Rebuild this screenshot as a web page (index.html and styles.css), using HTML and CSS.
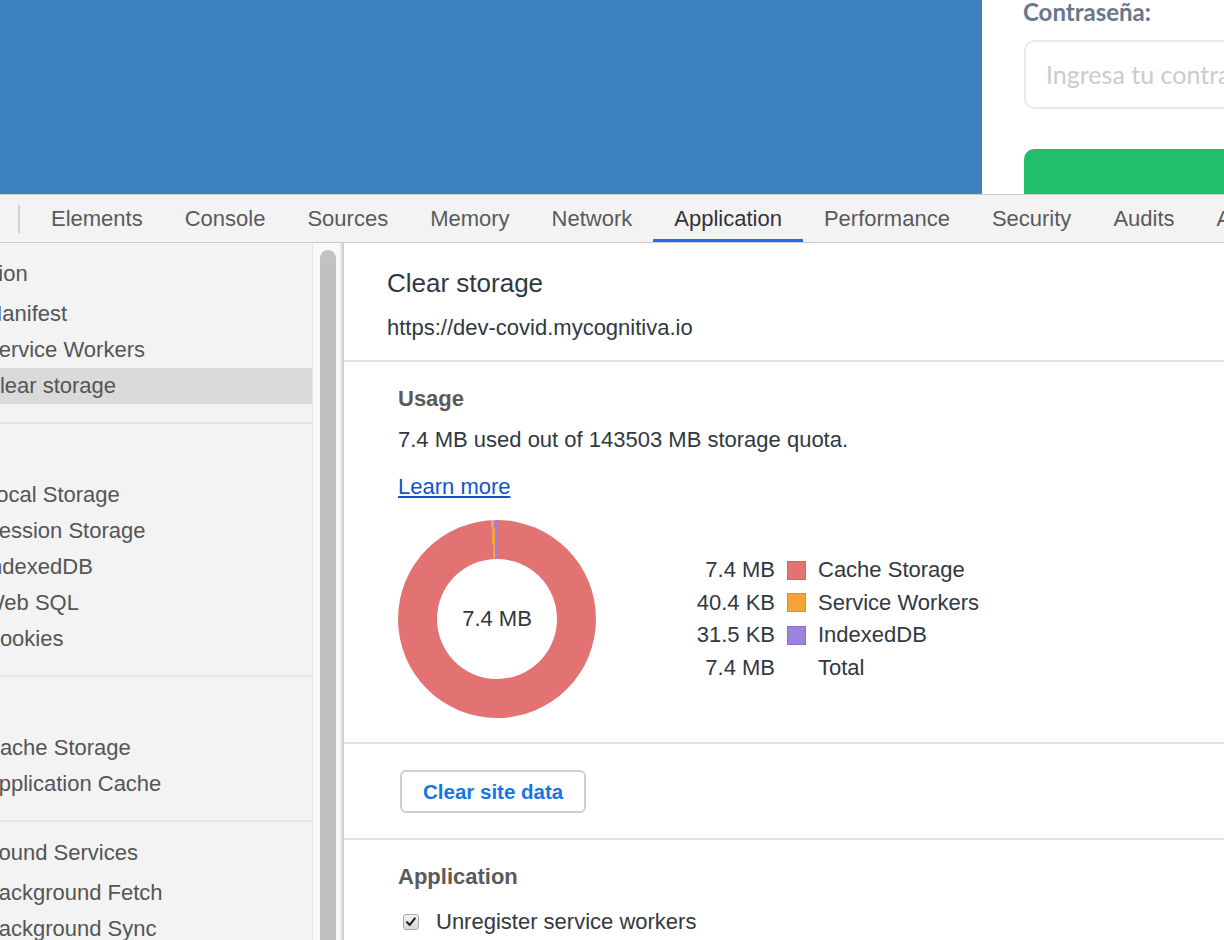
FILE: index.html
```html
<!DOCTYPE html>
<html lang="es">
<head>
<meta charset="utf-8">
<title>DevTools - Clear storage</title>
<link rel="stylesheet" href="styles.css">
</head>
<body>
<div class="site">
  <div class="site-hero"></div>
  <div class="site-form">
    <div class="form-label">Contraseña:</div>
    <div class="form-input">Ingresa tu contraseña</div>
    <div class="form-btn"></div>
  </div>
</div>
<div class="devtools">
  <div class="tabbar">
    <div class="tab-lead"><span class="tab-sep"></span></div>
    <div class="tab">Elements</div>
    <div class="tab">Console</div>
    <div class="tab">Sources</div>
    <div class="tab">Memory</div>
    <div class="tab">Network</div>
    <div class="tab active">Application</div>
    <div class="tab">Performance</div>
    <div class="tab">Security</div>
    <div class="tab">Audits</div>
    <div class="tab">Accessibility</div>
  </div>
  <div class="dt-body">
    <aside class="sidebar">
      <div class="sb-sec">
        <div class="sb-hd">Application</div>
        <div class="sb-item">Manifest</div>
        <div class="sb-item">Service Workers</div>
        <div class="sb-item selected">Clear storage</div>
      </div>
      <div class="sb-sec">
        <div class="sb-hd">Storage</div>
        <div class="sb-item">Local Storage</div>
        <div class="sb-item">Session Storage</div>
        <div class="sb-item">IndexedDB</div>
        <div class="sb-item">Web SQL</div>
        <div class="sb-item">Cookies</div>
      </div>
      <div class="sb-sec">
        <div class="sb-hd">Cache</div>
        <div class="sb-item">Cache Storage</div>
        <div class="sb-item">Application Cache</div>
      </div>
      <div class="sb-sec last">
        <div class="sb-hd sb-hd-bg">Background Services</div>
        <div class="sb-item">Background Fetch</div>
        <div class="sb-item">Background Sync</div>
      </div>
    </aside>
    <div class="scrolltrack"><div class="thumb"></div></div>
    <main class="content">
      <section class="cs-head">
        <div class="cs-title">Clear storage</div>
        <div class="cs-url">https://dev-covid.mycognitiva.io</div>
      </section>
      <section class="cs-sec">
        <div class="cs-h">Usage</div>
        <div class="cs-text">7.4 MB used out of 143503 MB storage quota.</div>
        <a class="cs-link" href="#">Learn more</a>
        <div class="chart-row">
          <div class="donut"><div class="donut-hole">7.4 MB</div></div>
          <div class="legend">
            <span class="lg-val">7.4 MB</span><span class="sw sw-cache"></span><span class="lg-lbl">Cache Storage</span>
            <span class="lg-val">40.4 KB</span><span class="sw sw-sw"></span><span class="lg-lbl">Service Workers</span>
            <span class="lg-val">31.5 KB</span><span class="sw sw-idb"></span><span class="lg-lbl">IndexedDB</span>
            <span class="lg-val">7.4 MB</span><span class="sw-none"></span><span class="lg-lbl">Total</span>
          </div>
        </div>
      </section>
      <section class="cs-btn-sec">
        <div class="btn">Clear site data</div>
      </section>
      <section class="cs-sec cs-app">
        <div class="cs-h">Application</div>
        <div class="cb-row">
          <span class="cb"><svg viewBox="0 0 16 16" width="14" height="14"><path d="M3.5 8.2 L6.6 11.3 L12.4 3.8" fill="none" stroke="#222" stroke-width="2.4" stroke-linecap="round" stroke-linejoin="round"/></svg></span>
          <span class="cb-lbl">Unregister service workers</span>
        </div>
      </section>
    </main>
  </div>
</div>
</body>
</html>
```

FILE: styles.css
```css
html, body {
  margin: 0;
  padding: 0;
}
body {
  width: 1224px;
  height: 940px;
  overflow: hidden;
  font-family: "Liberation Sans", Arial, sans-serif;
  background: #fff;
}

/* ---------- page behind devtools ---------- */
.site {
  display: flex;
  height: 194px;
}
.site-hero {
  width: 982px;
  flex: none;
  background: #3d81be;
}
.site-form {
  flex: 1;
  background: #fff;
  padding-left: 41px;
  overflow: hidden;
  font-family: Lato, "Open Sans", sans-serif;
}
.form-label {
  font-weight: 700;
  font-size: 24px;
  line-height: 23px;
  color: #687789;
  white-space: nowrap;
}
.form-input {
  margin-top: 17px;
  margin-left: 1px;
  width: 300px;
  height: 69px;
  box-sizing: border-box;
  border: 2px solid #e9e9e9;
  border-radius: 10px;
  padding-left: 20px;
  font-size: 25px;
  line-height: 65px;
  color: #cbcbcb;
  white-space: nowrap;
  overflow: hidden;
}
.form-btn {
  margin-top: 40px;
  margin-left: 1px;
  width: 300px;
  height: 70px;
  border-radius: 10px;
  background: #21bf6a;
}

/* ---------- devtools ---------- */
.devtools {
  border-top: 1px solid #cbcbcb;
  height: 745px;
  display: flex;
  flex-direction: column;
  background: #fff;
}
.tabbar {
  height: 48px;
  flex: none;
  box-sizing: border-box;
  border-bottom: 1px solid #cbcbcb;
  background: #f3f3f3;
  display: flex;
  font-size: 22px;
  white-space: nowrap;
  overflow: hidden;
}
.tab-lead {
  width: 30px;
  flex: none;
  display: flex;
  align-items: center;
}
.tab-sep {
  margin-left: 18px;
  width: 2px;
  height: 28px;
  background: #d0d0d0;
}
.tab {
  flex: none;
  padding: 0 21px;
  display: flex;
  align-items: center;
  color: #5a5a5a;
}
.tab.active {
  color: #333;
  box-shadow: inset 0 -3px 0 #1a73e8;
}

.dt-body {
  flex: 1;
  display: flex;
  min-height: 0;
}

/* sidebar */
.sidebar {
  width: 312px;
  flex: none;
  background: #f3f3f3;
  border-right: 1px solid #e6e6e6;
  overflow: hidden;
  font-size: 22px;
  color: #555;
  white-space: nowrap;
}
.sb-sec {
  padding: 13px 0 18px;
  border-bottom: 2px solid #e6e6e6;
}
.sb-sec.last {
  border-bottom: none;
}
.sb-hd {
  height: 36px;
  line-height: 36px;
  margin-bottom: 4px;
  text-indent: -80px;
}
.sb-hd-bg {
  text-indent: -70px;
}
.sb-item {
  height: 36px;
  line-height: 36px;
  text-indent: -16px;
}
.sb-item.selected {
  background: #dadada;
}

/* scrollbar */
.scrolltrack {
  width: 27px;
  flex: none;
  background: #fafafa;
  border-right: 2px solid #e9e9e9;
  display: flex;
  flex-direction: column;
}
.thumb {
  margin: 7px 0 0 7px;
  width: 16px;
  flex: 1;
  border-radius: 8px 8px 0 0;
  background: #c1c1c1;
}

/* content */
.content {
  flex: 1;
  border-left: 2px solid #d0d0d0;
  overflow: hidden;
  color: #303942;
  font-size: 22px;
}
.cs-head {
  padding: 24px 0 18px 43px;
  border-bottom: 2px solid #e4e4e4;
}
.cs-title {
  font-size: 26px;
  line-height: 32px;
}
.cs-url {
  margin-top: 15px;
  line-height: 28px;
}
.cs-sec {
  padding: 23px 0 24px 54px;
  border-bottom: 2px solid #e4e4e4;
}
.cs-h {
  font-weight: 700;
  line-height: 28px;
  color: #5a5a5a;
}
.cs-text {
  margin-top: 13px;
  line-height: 28px;
}
.cs-link {
  display: inline-block;
  margin-top: 19px;
  line-height: 28px;
  color: #1155cc;
  text-decoration: underline;
}
.chart-row {
  margin-top: 19px;
  display: flex;
  align-items: center;
}
.donut {
  width: 198px;
  height: 198px;
  flex: none;
  border-radius: 50%;
  background: conic-gradient(#e27372 0 99.05%, #f8a23a 99.05% 99.56%, #9d82e0 99.56% 100%);
  display: flex;
  align-items: center;
  justify-content: center;
}
.donut-hole {
  width: 120px;
  height: 120px;
  border-radius: 50%;
  background: #fff;
  display: flex;
  align-items: center;
  justify-content: center;
  font-size: 22px;
  color: #303942;
}
.legend {
  margin-left: 84px;
  display: grid;
  grid-template-columns: 95px 19px auto;
  grid-auto-rows: 32.5px;
  column-gap: 12px;
  align-items: center;
  white-space: nowrap;
}
.lg-val {
  text-align: right;
}
.sw {
  width: 19px;
  height: 19px;
  box-sizing: border-box;
  border: 1px solid;
}
.sw-cache {
  background: #e27372;
  border-color: #cf6564;
}
.sw-sw {
  background: #f8a23a;
  border-color: #e08f2b;
}
.sw-idb {
  background: #9d82e0;
  border-color: #8a70cc;
}
.sw-none {
  width: 19px;
  height: 19px;
}

.cs-btn-sec {
  padding: 26px 0 25px 56px;
  border-bottom: 2px solid #e4e4e4;
}
.btn {
  display: inline-flex;
  align-items: center;
  height: 43px;
  box-sizing: border-box;
  padding: 0 21px;
  border: 2px solid #cfcfcf;
  border-radius: 6px;
  background: #fff;
  color: #1a73e8;
  font-weight: 700;
  font-size: 20.5px;
}

.cs-app {
  border-bottom: none;
}
.cb-row {
  margin-top: 17px;
  display: flex;
  align-items: center;
  line-height: 28px;
}
.cb {
  width: 16px;
  height: 16px;
  box-sizing: border-box;
  margin-left: 5px;
  margin-right: 17px;
  border: 1px solid #a9a9a9;
  border-radius: 3px;
  background: linear-gradient(#f2f2f2, #d9d9d9);
  display: flex;
  align-items: center;
  justify-content: center;
}
.cb svg {
  display: block;
}
```
